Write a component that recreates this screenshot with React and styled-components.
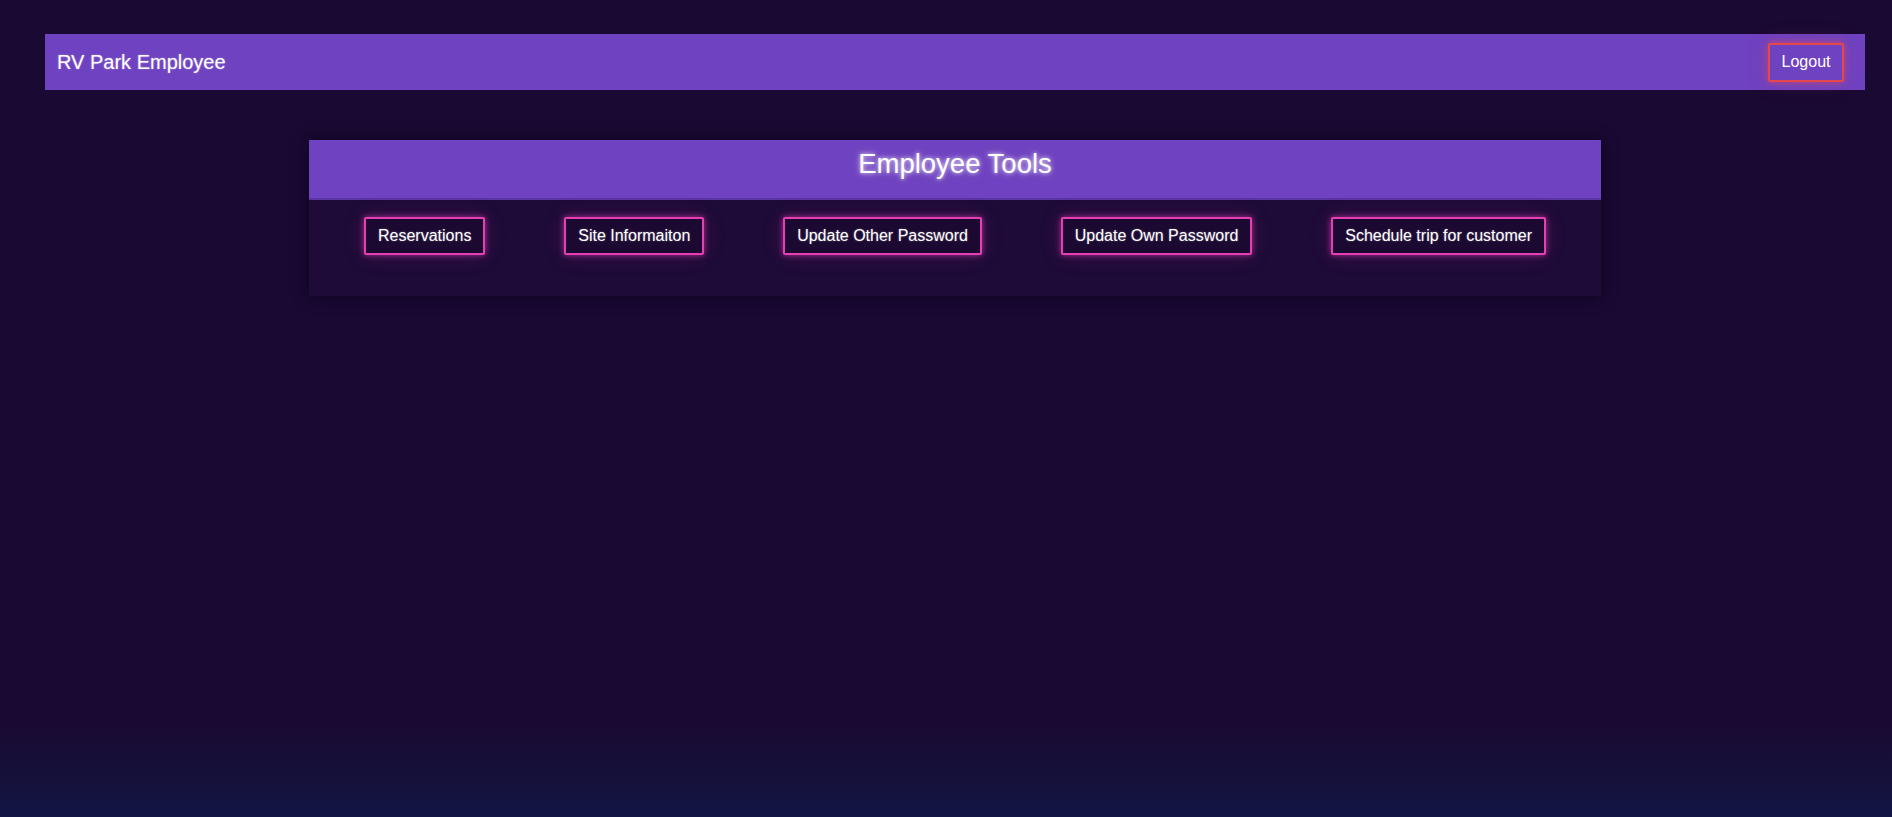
import styled, { createGlobalStyle } from "styled-components";

const tools = [
  "Reservations",
  "Site Informaiton",
  "Update Other Password",
  "Update Own Password",
  "Schedule trip for customer",
];

const App = () => {
  return (
    <>
      <GlobalStyle />
      <StyledPage>
        <StyledNav>
          <StyledBrand>RV Park Employee</StyledBrand>
          <StyledLogout>Logout</StyledLogout>
        </StyledNav>
        <StyledPanel>
          <StyledPanelHeader>
            <h2>Employee Tools</h2>
          </StyledPanelHeader>
          <StyledTools>
            {tools.map((tool) => (
              <StyledToolButton key={tool}>{tool}</StyledToolButton>
            ))}
          </StyledTools>
        </StyledPanel>
      </StyledPage>
    </>
  );
};

const GlobalStyle = createGlobalStyle`
  html, body {
    margin: 0;
    padding: 0;
  }
  body {
    font-family: "Liberation Sans", Arial, sans-serif;
    background: #1a0933;
    color: #fff;
  }
`;

const StyledPage = styled.div`
  min-height: 817px;
  box-sizing: border-box;
  padding: 34px 27px 0 45px;
  background: linear-gradient(
    to bottom,
    #1a0933 0%,
    #1a0933 88%,
    #161038 94%,
    #121545 100%
  );
`;

const StyledNav = styled.nav`
  height: 56px;
  box-sizing: border-box;
  display: flex;
  align-items: center;
  justify-content: space-between;
  padding: 0 21px 0 12px;
  background: #6f42c1;
`;

const StyledBrand = styled.span`
  font-size: 20px;
  color: #fff;
  text-shadow: 0 0 2px rgba(255, 255, 255, 0.4);
`;

const StyledLogout = styled.button`
  height: 39px;
  width: 76px;
  box-sizing: border-box;
  font-family: inherit;
  font-size: 16px;
  color: #fff;
  background: transparent;
  border: 2px solid #e5474f;
  border-radius: 2px;
  box-shadow: 0 0 6px rgba(229, 71, 79, 0.7), 0 0 24px rgba(229, 71, 79, 0.15);
  cursor: pointer;
`;

const StyledPanel = styled.section`
  width: 1292px;
  margin: 50px auto 0;
  background: #1e0b38;
  box-shadow: 0 0 14px rgba(8, 2, 18, 0.7);
`;

const StyledPanelHeader = styled.div`
  height: 60px;
  box-sizing: border-box;
  display: flex;
  align-items: center;
  justify-content: center;
  background: #6f42c1;
  border-bottom: 2px solid #5b35a3;
  h2 {
    margin: 0 0 10px;
    font-size: 27.5px;
    font-weight: normal;
    color: #fff;
    text-shadow: 0 0 4px rgba(255, 255, 255, 0.8), 0 0 10px rgba(255, 255, 255, 0.3);
  }
`;

const StyledTools = styled.div`
  display: flex;
  justify-content: space-between;
  align-items: center;
  padding: 17px 55px 41px;
`;

const StyledToolButton = styled.button`
  height: 38px;
  box-sizing: border-box;
  padding: 0 12px;
  font-family: inherit;
  font-size: 16px;
  color: #fff;
  background: #1b0932;
  border: 2px solid #e63fb4;
  border-radius: 2px;
  box-shadow: 0 0 6px rgba(232, 62, 180, 0.7), 0 0 24px rgba(232, 62, 180, 0.12);
  text-shadow: 0 0 2px rgba(255, 255, 255, 0.35);
  cursor: pointer;
`;

export default App;
